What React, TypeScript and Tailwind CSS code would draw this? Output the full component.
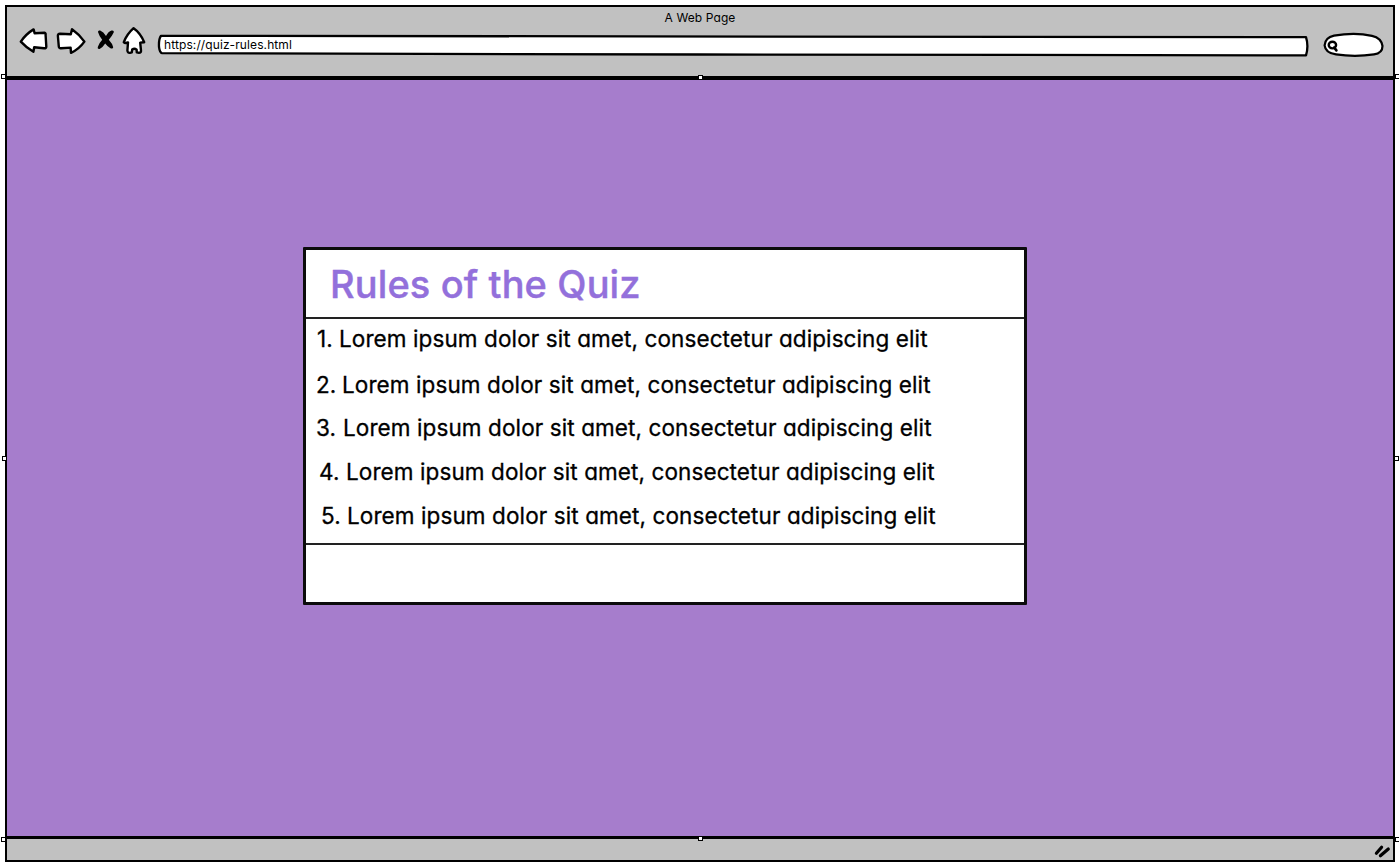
const rules = [
  { n: '1.', row: 'h-[40px] pl-[11px]', gap: 'w-[22px]' },
  { n: '2.', row: 'h-[51px] pl-[10px]', gap: 'w-[26px]' },
  { n: '3.', row: 'h-[36px] pl-[10px]', gap: 'w-[27px]' },
  { n: '4.', row: 'h-[52px] pl-[13px]', gap: 'w-[27px]' },
  { n: '5.', row: 'h-[36px] pl-[15px]', gap: 'w-[26px]' },
];

const handles = [
  'left-[1px] top-[74px]',
  'left-[698px] top-[75px]',
  'left-[1395px] top-[74px]',
  'left-[2px] top-[456px]',
  'left-[1394px] top-[456px]',
  'left-[1px] top-[837px]',
  'left-[698px] top-[836px]',
  'left-[1395px] top-[837px]',
];

function NavIcons() {
  return (
    <svg
      className="mt-[19px] h-[32px] w-[130px] shrink-0"
      viewBox="18 26 130 32"
      fill="white"
      stroke="black"
      strokeWidth="2.4"
      strokeLinejoin="round"
      strokeLinecap="round"
    >
      <path d="M20.8 41.6 Q26 34 33.6 29.4 L34.6 33.3 L44.5 32.8 Q46 33 45.6 35 L46.3 46.5 Q46.3 48.5 44 48.3 L34.2 47.2 L33.4 51.8 Q27 48.2 20.8 41.6 Z" />
      <path d="M84.4 41.6 Q79.5 34.5 72 29.2 L70.8 34.2 L60 33.8 Q57.6 33.8 57.9 36 L58.8 46.5 Q58.9 48.4 61 48.2 L70.6 47.6 L71 52.8 Q79 49.2 84.4 41.6 Z" />
      <path d="M133.6 28.2 Q127 34 123.8 42.2 Q125 43.6 128 42.5 L127.4 50.5 Q127.6 53.2 130 52.8 L131.8 52.4 L132.2 49.4 Q134.5 47.8 136.6 49.6 L136.8 52.4 L139 52.8 Q141.2 52.8 141 50.5 L140.2 42.6 L144.2 42.2 Q140.5 33 133.6 28.2 Z" />
      <g stroke="none" fill="black">
        <path d="M98 32 Q98 29.8 100.2 30.6 Q103.5 31.8 106 36 Q108.4 31.5 111.5 30.6 Q114.3 30.2 113.8 32.2 Q112 36.2 108.8 39.8 Q112.5 43.8 113.2 47.2 Q113 49.4 110.4 48.2 Q107.2 46.4 105.2 43.6 Q102.6 47.8 99.6 48.9 Q97 49.2 98 46.4 Q99.4 42.8 102.2 39.8 Q99.2 36.2 98 32 Z" />
      </g>
    </svg>
  );
}

function AddressBar() {
  return (
    <div className="relative ml-[9px] mt-[27px] h-[23px] w-[1153px] shrink-0">
      <svg className="absolute inset-0 h-full w-full" viewBox="157 34 1153 23" fill="white" stroke="black" strokeWidth="2.3" strokeLinejoin="round">
        <path d="M161 35.8 Q700 36.3 1306 37.2 Q1308.8 46 1306 55.4 Q900 55.2 700 54.5 Q400 53.6 162 53.2 Q159.8 52.8 159 47 Q158.6 39 161 35.8 Z" />
      </svg>
      <span className="relative ml-[7px] block whitespace-nowrap text-[12px] leading-[22px] tracking-[0.1px]">https://quiz-rules.html</span>
    </div>
  );
}

function SearchBox() {
  return (
    <svg className="ml-[12px] mt-[24px] h-[28px] w-[64px] shrink-0" viewBox="1322 31 64 28" fill="white" stroke="black" strokeWidth="2.2" strokeLinecap="round">
      <path d="M1334 35.6 Q1355 32.2 1372 35.8 Q1381.5 38 1382.5 46 Q1382.5 53.2 1374 54.4 Q1355 57.2 1336 54.4 Q1325.5 53.2 1324.6 45.4 Q1325 37.6 1334 35.6 Z" />
      <ellipse cx="1332.4" cy="45.1" rx="3.7" ry="3.3" strokeWidth="2.4" />
      <path d="M1334.2 47.6 L1336.4 50.4" strokeWidth="2.6" />
    </svg>
  );
}

export default function App() {
  return (
    <div className="relative h-[865px] w-[1399px] overflow-hidden bg-white pl-[5px] pt-[5px] font-['Inter',sans-serif] text-black [font-feature-settings:'cv11']">
      <div className="flex h-[857px] w-[1390px] flex-col border-2 border-black">
        <header className="flex h-[69px] shrink-0 flex-col bg-[#c1c1c1]">
          <div className="h-0 text-center text-[12px] leading-[22px] tracking-[0.1px]">A Web Page</div>
          <div className="flex items-start pl-[11px]">
            <NavIcons />
            <AddressBar />
            <SearchBox />
          </div>
        </header>

        <main className="h-[763px] shrink-0 border-b-[3px] border-t-4 border-black bg-[#a67dcc] pl-[296px] pt-[167px]">
          <section className="flex h-[358px] w-[724px] flex-col rounded-[1px] border-[3px] border-[#0c0c0c] bg-white">
            <h1 className="h-[67px] shrink-0 whitespace-nowrap pl-[24px] text-[38px] font-medium leading-[68px] tracking-[0.12px] text-[#9370db] [-webkit-text-stroke:0.4px_#9370db]">
              Rules of the Quiz
            </h1>
            <ol className="h-[228px] shrink-0 border-y-2 border-[#222] text-[22.5px] tracking-[0.1px] [-webkit-text-stroke:0.3px_black]">
              {rules.map((r) => (
                <li key={r.n} className={`flex items-center whitespace-nowrap ${r.row}`}>
                  <span className={`shrink-0 ${r.gap}`}>{r.n}</span>
                  <span>Lorem ipsum dolor sit amet, consectetur adipiscing elit</span>
                </li>
              ))}
            </ol>
          </section>
        </main>

        <footer className="flex flex-1 items-end justify-end bg-[#c1c1c1]">
          <svg className="h-[16px] w-[20px]" viewBox="1373 844 20 16" stroke="black" strokeWidth="3.2" strokeLinecap="round">
            <path d="M1376.4 853.2 L1381.6 847.2 M1380.4 855.8 L1388.3 849" />
          </svg>
        </footer>
      </div>

      {handles.map((pos) => (
        <span key={pos} className={`absolute h-[5px] w-[5px] border border-black bg-white ${pos}`} />
      ))}
    </div>
  );
}
